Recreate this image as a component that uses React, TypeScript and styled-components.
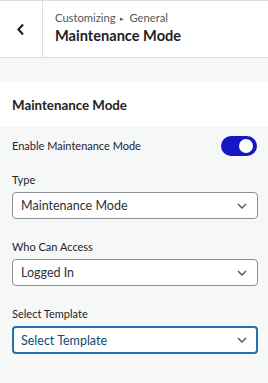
import React from 'react';
import styled, { createGlobalStyle } from 'styled-components';

const GlobalStyle = createGlobalStyle`
  html, body {
    margin: 0;
    padding: 0;
    background: #f6f7f7;
    font-family: Lato, "Open Sans", sans-serif;
    color: #1d2327;
  }
  * { box-sizing: border-box; }
`;

const Panel = styled.div`
  width: 268px;
  height: 383px;
  background: #f6f7f7;
  overflow: hidden;
`;

const Header = styled.div`
  display: flex;
  height: 58px;
  background: #fff;
  border-top: 1px solid #dcdcde;
  border-bottom: 1px solid #dcdcde;
`;

const BackButton = styled.button`
  width: 43px;
  flex: none;
  display: flex;
  align-items: center;
  justify-content: center;
  background: #fff;
  border: none;
  border-right: 1px solid #dcdcde;
  padding: 0 2px 0 0;
  cursor: pointer;
`;

const HeaderText = styled.div`
  display: flex;
  flex-direction: column;
  justify-content: center;
  padding-left: 12px;
  padding-bottom: 2px;
`;

const Crumb = styled.span`
  font-size: 11.2px;
  color: #50575e;
  line-height: 16px;
`;

const Arrow = styled.span`
  font-size: 7px;
  margin: 0 5px;
  vertical-align: 1px;
`;

const Title = styled.h1`
  margin: 0;
  font-size: 14.6px;
  font-weight: 700;
  line-height: 20px;
  color: #1d2327;
`;

const SectionTitle = styled.h2`
  margin: 24px 0 0;
  height: 45px;
  display: flex;
  align-items: center;
  padding: 0 12px;
  background: #fff;
  font-size: 13.3px;
  font-weight: 700;
  color: #1d2327;
`;

const Body = styled.div`
  padding: 9px 10px 0 12px;
  display: flex;
  flex-direction: column;
`;

const ToggleRow = styled.div`
  display: flex;
  align-items: center;
  justify-content: space-between;
  height: 20px;
  padding-right: 1px;
`;

const Label = styled.label`
  font-size: 11px;
  color: #1d2327;
  line-height: 16px;
`;

const FieldLabel = styled(Label)`
  display: block;
  margin-bottom: 4px;
`;

const Switch = styled.span<{ $on: boolean }>`
  position: relative;
  width: 36px;
  height: 20px;
  border-radius: 10px;
  background: ${(p) => (p.$on ? '#1616c6' : '#8c8f94')};
`;

const Knob = styled.span<{ $on: boolean }>`
  position: absolute;
  top: 3px;
  left: ${(p) => (p.$on ? '18px' : '3px')};
  width: 14px;
  height: 14px;
  border-radius: 50%;
  background: #fff;
`;

const Field = styled.div<{ $gap: number }>`
  margin-top: ${(p) => p.$gap}px;
`;

const SelectBox = styled.div<{ $focused?: boolean }>`
  display: flex;
  align-items: center;
  justify-content: space-between;
  height: ${(p) => (p.$focused ? 28 : 27)}px;
  background: #fff;
  border: ${(p) => (p.$focused ? '2px solid #2271b1' : '1px solid #8c8f94')};
  border-radius: 4px;
  padding: 0 ${(p) => (p.$focused ? 9 : 10)}px 0 ${(p) => (p.$focused ? 7 : 8)}px;
  font-size: 12.5px;
  color: ${(p) => (p.$focused ? '#0a4b78' : '#2c3338')};
`;

const Chevron = () => (
  <svg width="10" height="6" viewBox="0 0 10 6" fill="none">
    <path d="M1 1l4 4 4-4" stroke="#50575e" strokeWidth="1.4" />
  </svg>
);

const BackIcon = () => (
  <svg width="9" height="13" viewBox="0 0 9 13" fill="none">
    <path d="M7 1.5L2.5 6.5 7 11.5" stroke="#1d2327" strokeWidth="2.2" />
  </svg>
);

const Select = (props: { value: string; focused?: boolean }) => (
  <SelectBox $focused={props.focused}>
    <span>{props.value}</span>
    <Chevron />
  </SelectBox>
);

const App = () => {
  return (
    <Panel>
      <GlobalStyle />
      <Header>
        <BackButton>
          <BackIcon />
        </BackButton>
        <HeaderText>
          <Crumb>
            Customizing<Arrow>▸</Arrow>General
          </Crumb>
          <Title>Maintenance Mode</Title>
        </HeaderText>
      </Header>
      <SectionTitle>Maintenance Mode</SectionTitle>
      <Body>
        <ToggleRow>
          <Label>Enable Maintenance Mode</Label>
          <Switch $on>
            <Knob $on />
          </Switch>
        </ToggleRow>
        <Field $gap={16}>
          <FieldLabel>Type</FieldLabel>
          <Select value="Maintenance Mode" />
        </Field>
        <Field $gap={20}>
          <FieldLabel>Who Can Access</FieldLabel>
          <Select value="Logged In" />
        </Field>
        <Field $gap={20}>
          <FieldLabel>Select Template</FieldLabel>
          <Select value="Select Template" focused />
        </Field>
      </Body>
    </Panel>
  );
};

export default App;
